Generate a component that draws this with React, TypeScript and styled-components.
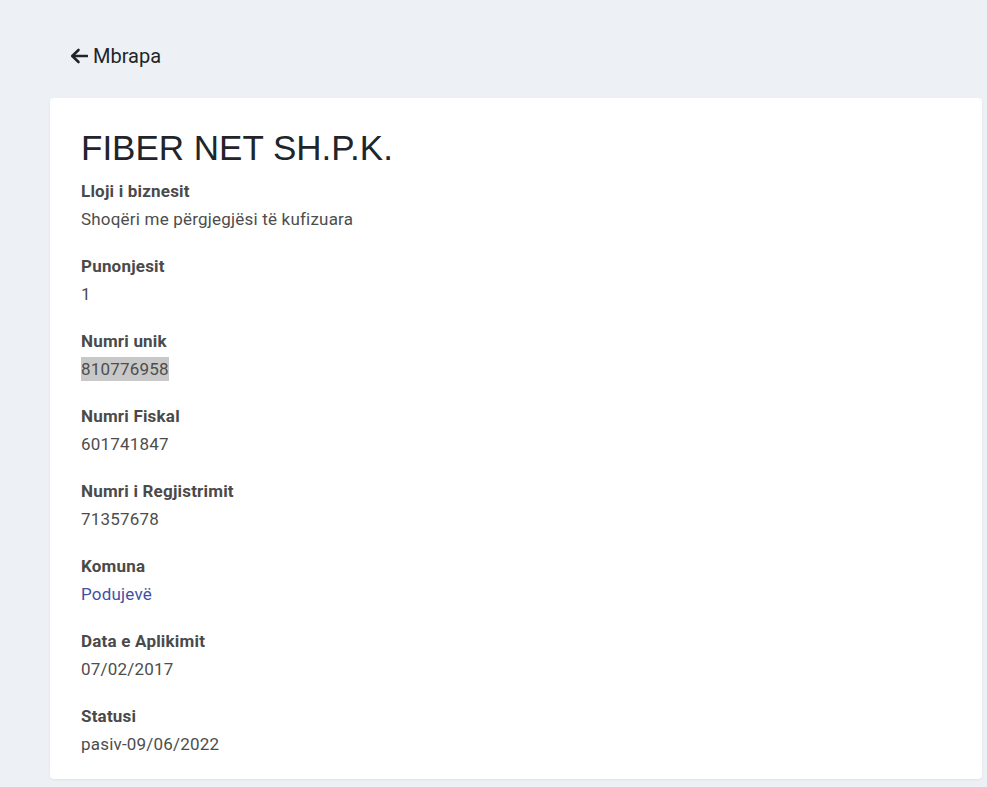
import React from 'react';
import styled, { createGlobalStyle } from 'styled-components';

const GlobalStyle = createGlobalStyle`
  html, body {
    margin: 0;
    padding: 0;
    background: #edf1f5;
  }
  body {
    font-family: Roboto, "Liberation Sans", sans-serif;
    color: #212529;
  }
`;

const Page = styled.div`
  padding: 0 5px 10px 50px;
  min-height: 787px;
  box-sizing: border-box;
`;

const TopBar = styled.div`
  height: 98px;
  display: flex;
  align-items: center;
  padding-left: 20px;
  padding-top: 14px;
  box-sizing: border-box;
`;

const BackLink = styled.a`
  display: inline-flex;
  align-items: center;
  gap: 5px;
  font-size: 20px;
  color: #212529;
  text-decoration: none;
  cursor: pointer;

  svg {
    width: 18px;
    height: 16px;
  }
`;

const Card = styled.section`
  background: #fff;
  border-radius: 4px;
  box-shadow: 0 1px 3px rgba(0, 0, 0, 0.06);
  padding: 28px 31px 0;
  overflow: hidden;
`;

const Title = styled.h1`
  margin: 0 0 10px;
  font-family: "Liberation Sans", Arial, sans-serif;
  font-weight: 400;
  font-size: 35px;
  line-height: 43px;
  color: #212529;
`;

const Field = styled.dl`
  margin: 0 0 23px;
`;

const Label = styled.dt`
  font-weight: 700;
  font-size: 17px;
  line-height: 24px;
  letter-spacing: 0.2px;
  color: #4a4a4a;
  margin-bottom: 4px;
`;

const Value = styled.dd<{ $link?: boolean; $selected?: boolean }>`
  margin: 0;
  font-size: 17px;
  line-height: 24px;
  letter-spacing: 0.2px;
  color: ${(p) => (p.$link ? '#3f51a5' : '#4d4d4d')};

  span {
    background: ${(p) => (p.$selected ? '#c8c8c8' : 'transparent')};
    padding: 2px 0;
  }
`;

const fields: { label: string; value: string; link?: boolean; selected?: boolean }[] = [
  { label: 'Lloji i biznesit', value: 'Shoqëri me përgjegjësi të kufizuara' },
  { label: 'Punonjesit', value: '1' },
  { label: 'Numri unik', value: '810776958', selected: true },
  { label: 'Numri Fiskal', value: '601741847' },
  { label: 'Numri i Regjistrimit', value: '71357678' },
  { label: 'Komuna', value: 'Podujevë', link: true },
  { label: 'Data e Aplikimit', value: '07/02/2017' },
  { label: 'Statusi', value: 'pasiv-09/06/2022' },
];

const ArrowLeft = () => (
  <svg viewBox="0 0 18 16" fill="none" stroke="currentColor" strokeWidth="2.6" strokeLinecap="round" strokeLinejoin="round">
    <path d="M17 8H2.5" />
    <path d="M8.5 2L2.3 8l6.2 6" />
  </svg>
);

export default function App() {
  return (
    <Page>
      <GlobalStyle />
      <TopBar>
        <BackLink>
          <ArrowLeft />
          Mbrapa
        </BackLink>
      </TopBar>
      <Card>
        <Title>FIBER NET SH.P.K.</Title>
        {fields.map((f) => (
          <Field key={f.label}>
            <Label>{f.label}</Label>
            <Value $link={f.link} $selected={f.selected}>
              <span>{f.value}</span>
            </Value>
          </Field>
        ))}
      </Card>
    </Page>
  );
}
